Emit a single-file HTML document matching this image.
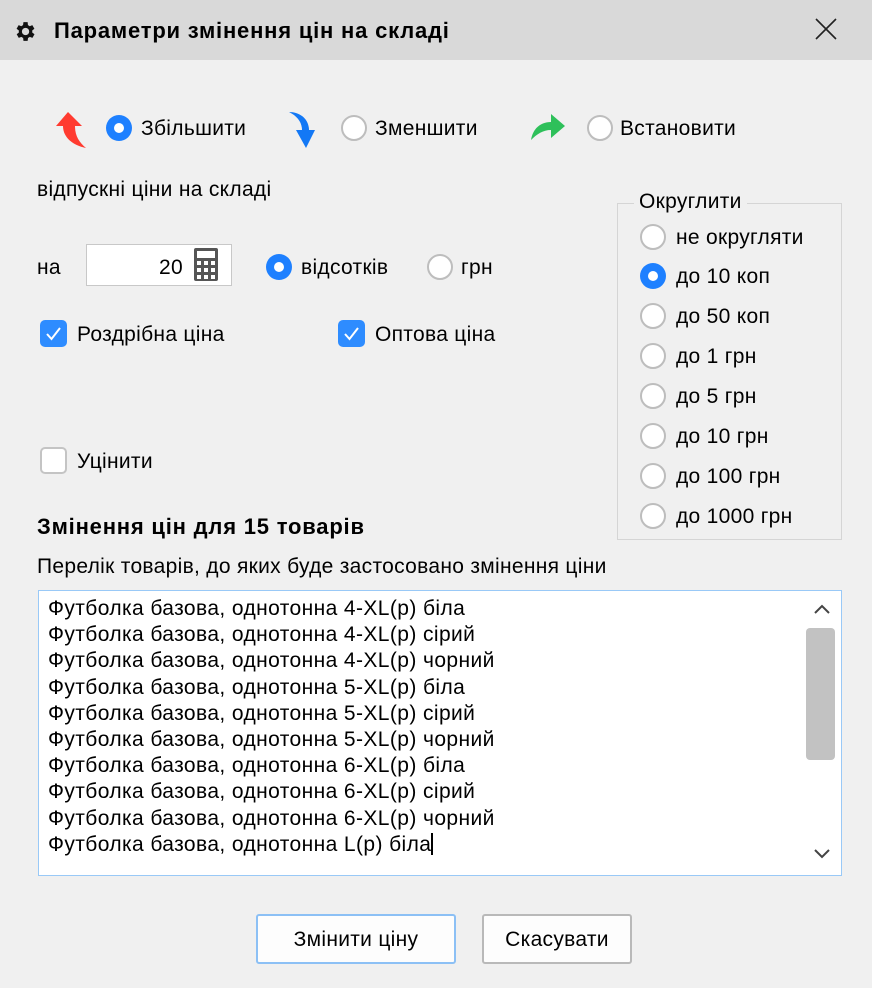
<!DOCTYPE html>
<html><head><meta charset="utf-8">
<style>
*{margin:0;padding:0;box-sizing:border-box}
body{width:872px;height:988px;background:#f0f0f0;font-family:"Liberation Sans","DejaVu Sans",sans-serif;font-size:21px;letter-spacing:0.3px;color:#000;position:relative;overflow:hidden}
.a{position:absolute;white-space:nowrap;line-height:24px}
.r{position:absolute;width:26px;height:26px;border-radius:50%;border:2px solid #bdbdbd;background:#fff}
.r.on{border:none;background:#1e80ff}
.r.on::after{content:"";position:absolute;left:8px;top:8px;width:10px;height:10px;border-radius:50%;background:#fff}
.cb{position:absolute;width:27px;height:27px;border-radius:5px;background:#2e8cff}
.cb.off{background:#fff;border:2px solid #c4c4c4}
.btn{position:absolute;background:#fdfdfd;border:2px solid #b9b9b9;border-radius:3px;text-align:center;line-height:47px}
</style></head><body>
<div style="position:absolute;left:0;top:0;width:872px;height:60px;background:#d9d9d9"></div>
<svg class="a" style="left:12px;top:19px" width="25" height="25" viewBox="0 0 24 24"><path fill="#111" d="M19.4 13a7.5 7.5 0 0 0 0-2l2.1-1.6-2-3.5-2.5 1a7 7 0 0 0-1.7-1L15 3h-4l-.4 2.9a7 7 0 0 0-1.7 1l-2.5-1-2 3.5L6.6 11a7.5 7.5 0 0 0 0 2l-2.1 1.6 2 3.5 2.5-1a7 7 0 0 0 1.7 1L11 21h4l.4-2.9a7 7 0 0 0 1.7-1l2.5 1 2-3.5zM13 15.5a3.5 3.5 0 1 1 0-7 3.5 3.5 0 0 1 0 7z"/></svg>
<div class="a" style="left:54px;top:19px;font-weight:bold;font-size:22px;letter-spacing:0.8px">Параметри змінення цін на складі</div>
<svg class="a" style="left:815px;top:18px" width="22" height="22" viewBox="0 0 22 22"><path d="M1 1L21 21M21 1L1 21" stroke="#222" stroke-width="1.6"/></svg>

<svg class="a" style="left:54px;top:110px" width="34" height="40" viewBox="0 0 34 40"><path fill="#ff3b30" d="M14 2L2 16h7c0 11 9 19 23 22-7-6-11-12-11-22h7z"/></svg>
<div class="r on" style="left:106px;top:115px"></div>
<div class="a" style="left:141px;top:117px">Збільшити</div>
<svg class="a" style="left:288px;top:110px" width="34" height="40" viewBox="0 0 34 40"><path fill="#1378f5" d="M1 2c11 0 20 7 20 18h6L18 38 8 20h6C14 12 9 6 1 2z"/></svg>
<div class="r" style="left:341px;top:115px"></div>
<div class="a" style="left:375px;top:117px">Зменшити</div>
<svg class="a" style="left:529px;top:112px" width="38" height="30" viewBox="0 0 38 30"><path fill="#2ec05a" d="M2 28C4 16 12 10 22 10V2l14 12-14 12v-8c-8 0-14 4-20 10z"/></svg>
<div class="r" style="left:587px;top:115px"></div>
<div class="a" style="left:620px;top:117px">Встановити</div>

<div class="a" style="left:37px;top:178px">відпускні ціни на складі</div>

<div class="a" style="left:37px;top:256px">на</div>
<div style="position:absolute;left:86px;top:244px;width:146px;height:42px;background:#fff;border:1px solid #c8c8c8"></div>
<div class="a" style="left:140px;top:256px;width:43px;text-align:right">20</div>
<svg class="a" style="left:194px;top:248px" width="24" height="33" viewBox="0 0 24 33"><rect x="0" y="0" width="24" height="33" rx="2" fill="#555"/><rect x="3" y="3" width="18" height="7" fill="#fff"/><g fill="#fff"><rect x="3" y="13" width="4" height="4"/><rect x="10" y="13" width="4" height="4"/><rect x="17" y="13" width="4" height="4"/><rect x="3" y="20" width="4" height="4"/><rect x="10" y="20" width="4" height="4"/><rect x="17" y="20" width="4" height="4"/><rect x="3" y="27" width="4" height="4"/><rect x="10" y="27" width="4" height="4"/><rect x="17" y="27" width="4" height="4"/></g></svg>
<div class="r on" style="left:266px;top:254px"></div>
<div class="a" style="left:301px;top:256px">відсотків</div>
<div class="r" style="left:427px;top:254px"></div>
<div class="a" style="left:461px;top:256px">грн</div>

<div class="cb" style="left:40px;top:320px"><svg width="27" height="27" viewBox="0 0 27 27"><path d="M7 14l4.5 5L20 8" stroke="#fff" stroke-width="2" fill="none"/></svg></div>
<div class="a" style="left:77px;top:323px">Роздрібна ціна</div>
<div class="cb" style="left:338px;top:320px"><svg width="27" height="27" viewBox="0 0 27 27"><path d="M7 14l4.5 5L20 8" stroke="#fff" stroke-width="2" fill="none"/></svg></div>
<div class="a" style="left:375px;top:323px">Оптова ціна</div>

<div class="cb off" style="left:40px;top:447px"></div>
<div class="a" style="left:77px;top:450px">Уцінити</div>

<div class="a" style="left:37px;top:515px;font-weight:bold;font-size:22px;letter-spacing:0.8px">Змінення цін для 15 товарів</div>
<div class="a" style="left:37px;top:555px">Перелік товарів, до яких буде застосовано змінення ціни</div>

<div style="position:absolute;left:617px;top:203px;width:225px;height:337px;border:1px solid #d5d5d5"></div>
<div class="a" style="left:634px;top:190px;background:#f0f0f0;padding:0 5px">Округлити</div>
<div class="r" style="left:640px;top:224px"></div><div class="a" style="left:676px;top:226px">не округляти</div>
<div class="r on" style="left:640px;top:263px"></div><div class="a" style="left:676px;top:265px">до 10 коп</div>
<div class="r" style="left:640px;top:303px"></div><div class="a" style="left:676px;top:305px">до 50 коп</div>
<div class="r" style="left:640px;top:343px"></div><div class="a" style="left:676px;top:345px">до 1 грн</div>
<div class="r" style="left:640px;top:383px"></div><div class="a" style="left:676px;top:385px">до 5 грн</div>
<div class="r" style="left:640px;top:423px"></div><div class="a" style="left:676px;top:425px">до 10 грн</div>
<div class="r" style="left:640px;top:463px"></div><div class="a" style="left:676px;top:465px">до 100 грн</div>
<div class="r" style="left:640px;top:503px"></div><div class="a" style="left:676px;top:505px">до 1000 грн</div>

<div style="position:absolute;left:38px;top:590px;width:804px;height:286px;background:#fff;border:1px solid #99c9f7"></div>
<div style="position:absolute;left:48px;top:596px;line-height:26.2px;font-size:21px;letter-spacing:0.4px;white-space:nowrap">
Футболка базова, однотонна 4-XL(р) біла<br>
Футболка базова, однотонна 4-XL(р) сірий<br>
Футболка базова, однотонна 4-XL(р) чорний<br>
Футболка базова, однотонна 5-XL(р) біла<br>
Футболка базова, однотонна 5-XL(р) сірий<br>
Футболка базова, однотонна 5-XL(р) чорний<br>
Футболка базова, однотонна 6-XL(р) біла<br>
Футболка базова, однотонна 6-XL(р) сірий<br>
Футболка базова, однотонна 6-XL(р) чорний<br>
Футболка базова, однотонна L(р) біла<span style="display:inline-block;width:1.5px;height:22px;background:#000;vertical-align:-4px"></span>
</div>
<div style="position:absolute;left:806px;top:628px;width:29px;height:132px;background:#c2c2c2;border-radius:4px"></div>
<svg class="a" style="left:813px;top:603px" width="18" height="12" viewBox="0 0 18 12"><path d="M2 10L9 3l7 7" stroke="#444" stroke-width="2" fill="none"/></svg>
<svg class="a" style="left:813px;top:848px" width="18" height="12" viewBox="0 0 18 12"><path d="M2 2l7 7 7-7" stroke="#444" stroke-width="2" fill="none"/></svg>

<div class="btn" style="left:256px;top:914px;width:200px;height:50px;border-color:#8cc0f5">Змінити ціну</div>
<div class="btn" style="left:482px;top:914px;width:150px;height:50px">Скасувати</div>
</body></html>
